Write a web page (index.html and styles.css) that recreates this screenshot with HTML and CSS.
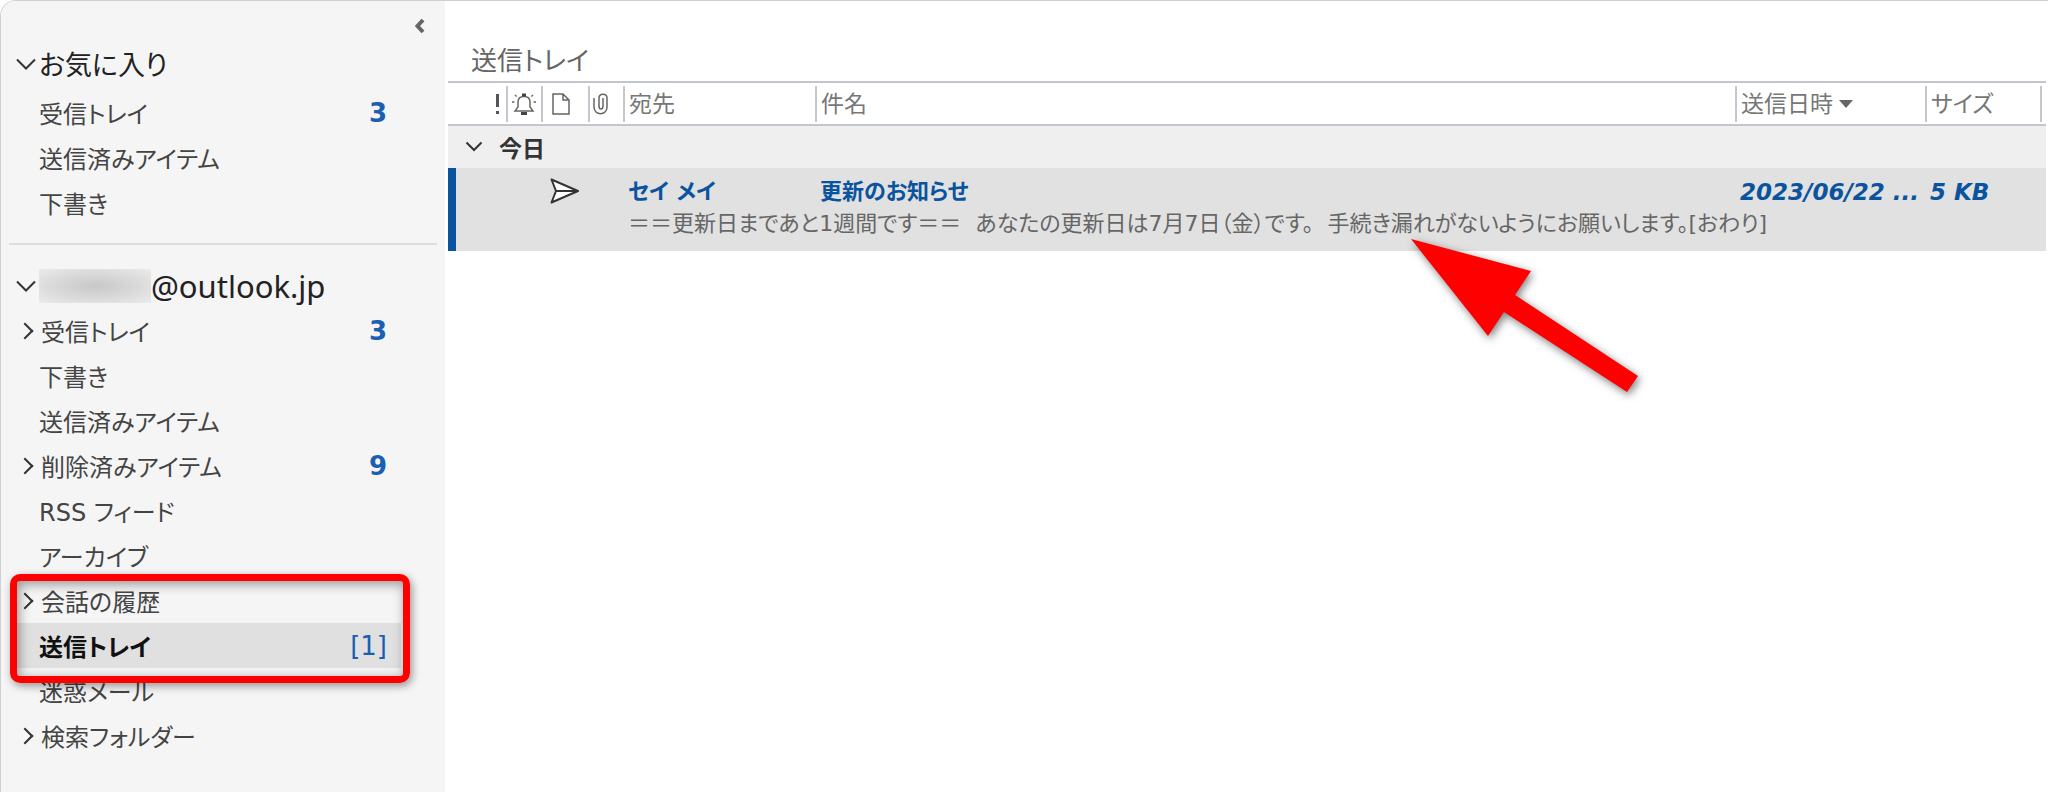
FILE: index.html
```
<!DOCTYPE html>
<html lang="ja">
<head>
  <meta charset="UTF-8">
  <meta name="viewport" content="width=device-width, initial-scale=1.0">
  <title>送信トレイ</title>
  <link rel="stylesheet" href="styles.css">
</head>
<body>
  <div class="window">
    <nav class="sidebar">
      <div class="sidebar-top">
        <button type="button" class="collapse" aria-label="フォルダー ウィンドウを最小化">
          <svg width="12" height="16" viewBox="0 0 12 16"><path d="M9 2L3.500 8L9 14" fill="none" stroke="#666" stroke-width="4"/></svg>
        </button>
      </div>

      <h2 class="group">
        <svg class="chevron-down" width="22" height="14" viewBox="0 0 22 14"><path d="M2 2.500L11 11.500L20 2.500" fill="none" stroke="#333" stroke-width="2"/></svg>
        お気に入り
      </h2>
      <ul class="folders">
        <li><a href="#" class="folder"><span class="name">受信トレイ</span><span class="count">3</span></a></li>
        <li><a href="#" class="folder"><span class="name">送信済みアイテム</span></a></li>
        <li><a href="#" class="folder"><span class="name">下書き</span></a></li>
      </ul>

      <hr class="divider">

      <h2 class="group account">
        <svg class="chevron-down" width="22" height="14" viewBox="0 0 22 14"><path d="M2 2.500L11 11.500L20 2.500" fill="none" stroke="#333" stroke-width="2"/></svg>
        <span class="masked"></span>@outlook.jp
      </h2>
      <ul class="folders">
        <li><a href="#" class="folder parent"><span class="name">受信トレイ</span><span class="count">3</span></a></li>
        <li><a href="#" class="folder"><span class="name">下書き</span></a></li>
        <li><a href="#" class="folder"><span class="name">送信済みアイテム</span></a></li>
        <li><a href="#" class="folder parent"><span class="name">削除済みアイテム</span><span class="count">9</span></a></li>
        <li><a href="#" class="folder"><span class="name">RSS フィード</span></a></li>
        <li><a href="#" class="folder"><span class="name">アーカイブ</span></a></li>
        <li class="marked">
          <a href="#" class="folder parent"><span class="name">会話の履歴</span></a>
          <a href="#" class="folder selected"><span class="name">送信トレイ</span><span class="count total">[1]</span></a>
        </li>
        <li><a href="#" class="folder"><span class="name">迷惑メール</span></a></li>
        <li><a href="#" class="folder parent"><span class="name">検索フォルダー</span></a></li>
      </ul>
    </nav>

    <main class="mail">
      <h1 class="title">送信トレイ</h1>
      <table class="messages">
        <colgroup>
          <col class="col-importance">
          <col class="col-reminder">
          <col class="col-icon">
          <col class="col-attach">
          <col class="col-to">
          <col class="col-subject">
          <col class="col-date">
          <col class="col-size">
          <col class="col-rest">
        </colgroup>
        <thead>
          <tr>
            <th aria-label="重要度">
              <div class="cell importance"><svg width="6" height="22" viewBox="0 0 6 22"><path d="M2 1H5V14H2ZM2 18H5V21H2Z" fill="#555"/></svg></div>
            </th>
            <th aria-label="アラーム">
              <div class="cell icon"><svg width="24" height="24" viewBox="0 0 24 24" fill="none" stroke="#666" stroke-width="1.500"><path d="M3 19H21L18 15V10C18 6.500 16 4.500 12 4.500S6 6.500 6 10V15Z"/><path d="M10 3H14M9 21.500H15" stroke="#444" stroke-width="3"/><path d="M3 3L4.500 4.500M21 3L19.500 4.500M0 10H2.500M24 10H21.500"/></svg></div>
            </th>
            <th aria-label="アイコン">
              <div class="cell icon page"><svg width="18" height="22" viewBox="0 0 18 22" fill="none" stroke="#666" stroke-width="1.500"><path d="M1 1H11L17 7V21H1ZM11 1V7H17"/></svg></div>
            </th>
            <th aria-label="添付ファイル">
              <div class="cell icon clip"><svg width="16" height="22" viewBox="0 0 16 22" fill="none" stroke="#666" stroke-width="1.500"><path d="M1 5V14C1 23 14 23 14 14V5C14 0 6 0 6 5V13C6 17 10 17 10 13V5"/></svg></div>
            </th>
            <th><div class="cell">宛先</div></th>
            <th><div class="cell">件名</div></th>
            <th><button type="button" class="cell sort">送信日時<svg width="14" height="8" viewBox="0 0 14 8"><path d="M0 0H14L7 8Z" fill="#666"/></svg></button></th>
            <th><div class="cell">サイズ</div></th>
            <th><div class="cell"></div></th>
          </tr>
        </thead>
        <tbody>
          <tr class="day">
            <th colspan="9">
              <div class="day-label">
                <svg width="18" height="12" viewBox="0 0 18 12"><path d="M1.500 1.500L9 9L16.500 1.500" fill="none" stroke="#333" stroke-width="2"/></svg>
                今日
              </div>
            </th>
          </tr>
        </tbody>
        <tbody class="message">
          <tr class="summary">
            <td class="bar" rowspan="2" colspan="2"></td>
            <td class="status" colspan="2">
              <svg width="30" height="26" viewBox="0 0 30 26"><path d="M1.500 1.500L28 13L1.500 24.500L6 13Z" fill="#fff" stroke="#333" stroke-width="2" stroke-linejoin="round"/><path d="M6 13H27" stroke="#333" stroke-width="2"/></svg>
            </td>
            <td class="text">セイ メイ</td>
            <td class="text">更新のお知らせ</td>
            <td class="text meta">2023/06/22 ...</td>
            <td class="text meta">5 KB</td>
            <td></td>
          </tr>
          <tr class="preview">
            <td colspan="2"></td>
            <td class="text" colspan="5">＝＝更新日まであと1週間です＝＝&nbsp; あなたの更新日は7月7日（金）です。&nbsp; 手続き漏れがないようにお願いします。[おわり]</td>
          </tr>
        </tbody>
      </table>
      <svg class="pointer" width="240" height="166" viewBox="0 0 240 166"><path d="M1 1L121 33L105 57L228 138L217 154L94 74L78 98Z" fill="#f00"/></svg>
    </main>
  </div>
</body>
</html>
```
FILE: styles.css
```
* {
  box-sizing: border-box;
}
body {
  margin: 0;
  background: #fff;
  color: #444;
  font-family: "DejaVu Sans", "Noto Sans CJK JP", sans-serif;
  font-feature-settings: "palt";
  font-size: 24px;
}
h1, h2, ul {
  margin: 0;
  padding: 0;
  font-weight: normal;
}
button {
  padding: 0;
  border: 0;
  background: none;
  color: inherit;
  font: inherit;
  font-feature-settings: inherit;
  cursor: pointer;
}
svg {
  display: block;
  flex: none;
}
.window {
  display: flex;
  min-height: 100vh;
  border-top: 1px solid #d0d0d0;
  border-left: 1px solid #d0d0d0;
  border-top-left-radius: 16px;
  overflow: hidden;
}

/* folder pane */
.sidebar {
  flex: none;
  width: 444px;
  background: #f5f5f5;
}
.sidebar-top {
  display: flex;
  justify-content: flex-end;
  height: 36px;
  padding: 17px 19px 0 0;
}
.collapse {
  height: 16px;
}
.group {
  display: flex;
  align-items: center;
  height: 53px;
  padding-left: 14px;
  color: #222;
  font-size: 27px;
}
.chevron-down {
  margin-right: 2px;
}
.account {
  height: 45px;
  font-size: 31px;
  font-family: "Noto Sans", "Noto Sans CJK JP", sans-serif;
}
.masked {
  width: 112px;
  height: 34px;
  background: radial-gradient(ellipse at center, #c8c8c8, #dcdcdc 60%, #ebebeb);
}
.folders {
  list-style: none;
}
.folder {
  display: flex;
  align-items: center;
  justify-content: space-between;
  height: 45px;
  margin: 0 44px 0 14px;
  padding: 0 14px 0 24px;
  color: #444;
  text-decoration: none;
}
.parent::before {
  content: "";
  width: 10px;
  height: 10px;
  margin: 0 10px 0 -20px;
  border-top: 2px solid #333;
  border-right: 2px solid #333;
  transform: rotate(45deg);
}
.parent .name {
  flex: 1;
}
.count {
  color: #1a5fb4;
  font-size: 26px;
  font-weight: bold;
}
.selected {
  background: #e0e0e0;
}
.selected .name {
  color: #111;
  font-weight: bold;
}
.count.total {
  font-weight: normal;
}
.divider {
  margin: 18px 8px;
  border: 0;
  border-top: 2px solid #ddd;
}
.marked {
  position: relative;
}
.marked::after {
  content: "";
  position: absolute;
  inset: -4px 35px -15px 9px;
  border: 7px solid #f00;
  border-radius: 10px;
  box-shadow: 2px 3px 8px rgba(0, 0, 0, 0.4), inset 2px 3px 12px rgba(0, 0, 0, 0.4);
  pointer-events: none;
}

/* message list */
.mail {
  position: relative;
  flex: 1;
  min-width: 0;
  padding: 35px 2px 0 3px;
}
.title {
  height: 45px;
  padding-left: 23px;
  color: #666;
  font-size: 26px;
  line-height: 50px;
}
.messages {
  width: 100%;
  border-collapse: separate;
  border-spacing: 0;
  table-layout: fixed;
  font-size: 23px;
}
.messages th,
.messages td {
  padding: 0;
  text-align: left;
  white-space: nowrap;
}
.col-importance { width: 58px; }
.col-reminder { width: 35px; }
.col-icon { width: 47px; }
.col-attach { width: 35px; }
.col-to { width: 192px; }
.col-date { width: 190px; }
.col-size { width: 115px; }
.col-rest { width: 6px; }

.messages thead th {
  height: 45px;
  border-top: 2px solid #c3c6cc;
  border-bottom: 2px solid #c3c6cc;
  color: #777;
  font-weight: normal;
}
.cell {
  display: flex;
  align-items: center;
  height: 36px;
  padding-left: 4px;
  border-left: 2px solid #c3c6cc;
  line-height: 32px;
}
.importance {
  justify-content: flex-end;
  padding-right: 6px;
  border-left: 0;
}
.page {
  padding-left: 9px;
}
.clip {
  padding-left: 3px;
}
.sort {
  width: 100%;
  gap: 6px;
}
.messages .day th {
  height: 42px;
  background: #efefef;
  color: #333;
}
.day-label {
  display: flex;
  align-items: center;
  gap: 16px;
  padding-left: 17px;
}
.message {
  background: #e1e1e1;
}
.bar {
  border-left: 8px solid #0a539e;
}
.messages .status {
  padding-top: 4px;
}
.status svg {
  margin-left: 9px;
}
.messages .summary .text {
  height: 42px;
  padding: 6px 0 0 5px;
  color: #0a539e;
  font-size: 22px;
  font-weight: bold;
  line-height: 36px;
}
.messages .summary .meta {
  font-size: 23px;
  font-style: italic;
}
.messages .preview .text {
  height: 41px;
  padding: 0 0 14px 5px;
  color: #666;
  font-size: 22px;
  line-height: 27px;
}
.pointer {
  position: absolute;
  top: 237px;
  left: 965px;
  filter: drop-shadow(2px 3px 4px rgba(0, 0, 0, 0.5));
}
```
